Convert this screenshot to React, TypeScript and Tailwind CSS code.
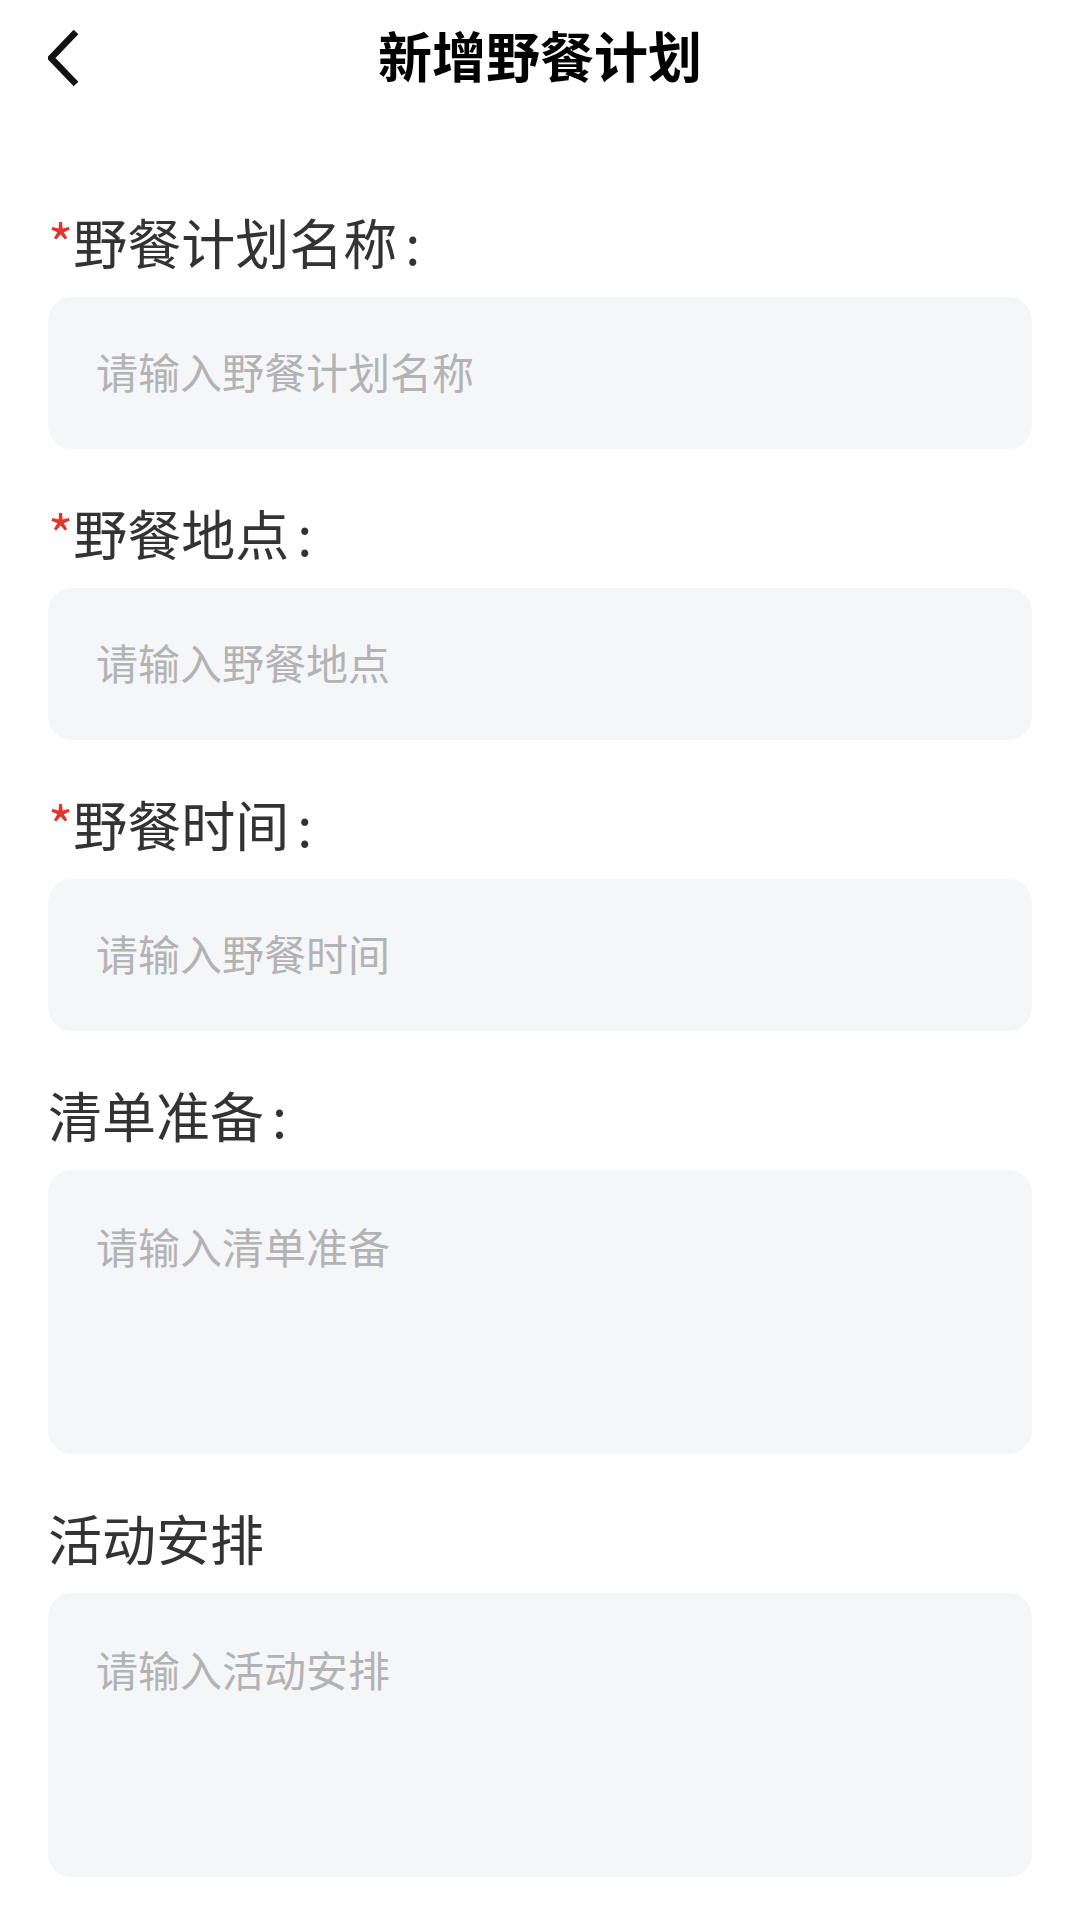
import React from "react";

const fields = [
  { label: "野餐计划名称", colon: true, placeholder: "请输入野餐计划名称", required: true, multi: false },
  { label: "野餐地点", colon: true, placeholder: "请输入野餐地点", required: true, multi: false },
  { label: "野餐时间", colon: true, placeholder: "请输入野餐时间", required: true, multi: false },
  { label: "清单准备", colon: true, placeholder: "请输入清单准备", required: false, multi: true },
  { label: "活动安排", colon: false, placeholder: "请输入活动安排", required: false, multi: true },
];

const BackIcon = () => (
  <svg width="60" height="110" viewBox="0 0 60 110" fill="none">
    <polyline
      points="28,32 3,58 28,84"
      stroke="#111"
      strokeWidth="6.5"
      strokeLinejoin="miter"
      fill="none"
    />
  </svg>
);

const App = () => {
  return (
    <div
      className="w-[1080px] min-h-[1920px] bg-white"
      style={{ fontFamily: '"Noto Sans CJK SC", "Noto Sans", sans-serif' }}
    >
      <header className="grid grid-cols-[1fr_auto_1fr] items-center h-[110px] px-[48px]">
        <div className="flex items-center">
          <BackIcon />
        </div>
        <h1 className="text-[54px] leading-[60px] font-bold text-black">新增野餐计划</h1>
        <div />
      </header>

      <form className="flex flex-col gap-[54px] px-[48px] pt-[102px]">
        {fields.map((f) => (
          <div key={f.label} className="flex flex-col gap-[25px]">
            <label className="text-[54px] leading-[60px] text-[#333] flex items-center">
              {f.required && <span className="text-[#e3352b]">*</span>}
              {f.label}
              {f.colon && <span className="ml-[8px]">:</span>}
            </label>
            {f.multi ? (
              <textarea
                placeholder={f.placeholder}
                className="h-[284px] w-full resize-none rounded-[24px] bg-[#f5f6f8] px-[48px] pt-[46px] text-[42px] leading-[60px] text-[#333] placeholder:text-[#b3b3b3] outline-none"
                style={{ fontFamily: '"Noto Sans CJK SC", "Noto Sans", sans-serif' }}
              />
            ) : (
              <input
                placeholder={f.placeholder}
                className="h-[152px] w-full rounded-[24px] bg-[#f5f6f8] px-[48px] pb-[6px] text-[42px] text-[#333] placeholder:text-[#b3b3b3] outline-none"
                style={{ fontFamily: '"Noto Sans CJK SC", "Noto Sans", sans-serif' }}
              />
            )}
          </div>
        ))}
      </form>
    </div>
  );
};

export default App;
